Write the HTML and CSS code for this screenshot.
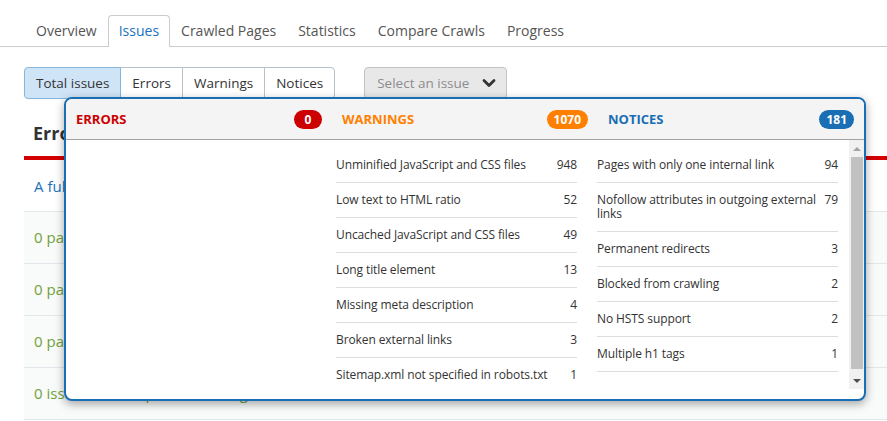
FILE: index.html
```html
<!DOCTYPE html>
<html lang="en">
<head>
<meta charset="utf-8">
<title>Site Audit - Issues</title>
<link rel="stylesheet" href="styles.css">
</head>
<body>
<nav class="tabs">
  <span class="tab">Overview</span>
  <span class="tab active">Issues</span>
  <span class="tab">Crawled Pages</span>
  <span class="tab">Statistics</span>
  <span class="tab">Compare Crawls</span>
  <span class="tab">Progress</span>
</nav>

<div class="toolbar">
  <div class="btn-group">
    <span class="btn active">Total issues</span>
    <span class="btn">Errors</span>
    <span class="btn">Warnings</span>
    <span class="btn">Notices</span>
  </div>
  <div class="select">
    <span>Select an issue</span>
    <svg class="chev" width="14" height="10" viewBox="0 0 14 10"><path d="M2 2.5 L7 7.5 L12 2.5" fill="none" stroke="#333" stroke-width="2.8" stroke-linecap="round" stroke-linejoin="round"/></svg>
  </div>
</div>

<section class="errors">
  <h2 class="errors-title">Errors</h2>
  <div class="redbar"></div>
  <div class="intro">A full list of errors found on your website</div>
  <div class="err-row">0 pages returned 5XX status code</div>
  <div class="err-row">0 pages returned 4XX status code</div>
  <div class="err-row">0 pages don't have title tags</div>
  <div class="err-row">0 issues with duplicate title tags</div>
</section>

<div class="popup">
  <div class="popup-head">
    <div class="head-cell"><span class="label red">ERRORS</span><span class="badge bg-red">0</span></div>
    <div class="head-cell"><span class="label orange">WARNINGS</span><span class="badge bg-orange">1070</span></div>
    <div class="head-cell"><span class="label blue">NOTICES</span><span class="badge bg-blue">181</span></div>
  </div>
  <div class="popup-body">
    <div class="col"></div>
    <div class="col">
      <div class="item"><span class="name">Unminified JavaScript and CSS files</span><span class="num">948</span></div>
      <div class="item"><span class="name">Low text to HTML ratio</span><span class="num">52</span></div>
      <div class="item"><span class="name">Uncached JavaScript and CSS files</span><span class="num">49</span></div>
      <div class="item"><span class="name">Long title element</span><span class="num">13</span></div>
      <div class="item"><span class="name">Missing meta description</span><span class="num">4</span></div>
      <div class="item"><span class="name">Broken external links</span><span class="num">3</span></div>
      <div class="item last"><span class="name">Sitemap.xml not specified in robots.txt</span><span class="num">1</span></div>
    </div>
    <div class="col">
      <div class="item"><span class="name">Pages with only one internal link</span><span class="num">94</span></div>
      <div class="item"><span class="name">Nofollow attributes in outgoing external<br>links</span><span class="num">79</span></div>
      <div class="item"><span class="name">Permanent redirects</span><span class="num">3</span></div>
      <div class="item"><span class="name">Blocked from crawling</span><span class="num">2</span></div>
      <div class="item"><span class="name">No HSTS support</span><span class="num">2</span></div>
      <div class="item"><span class="name">Multiple h1 tags</span><span class="num">1</span></div>
    </div>
    <div class="scrollbar">
      <div class="sb-arrow"><span class="tri-up"></span></div>
      <div class="sb-thumb"></div>
      <div class="sb-arrow"><span class="tri-down"></span></div>
    </div>
  </div>
</div>
</body>
</html>
```

FILE: styles.css
```css
* { box-sizing: border-box; }

body {
  margin: 0;
  width: 887px;
  height: 421px;
  overflow: hidden;
  position: relative;
  font-family: "Open Sans", "Liberation Sans", sans-serif;
  color: #333;
  background: #fff;
}

/* Tabs */
.tabs {
  display: flex;
  height: 47px;
  padding: 15px 0 0 25px;
  border-bottom: 1px solid #ccc;
}
.tab {
  height: 31px;
  padding: 0 10px;
  font-size: 14px;
  line-height: 30px;
  color: #555;
  border: 1px solid transparent;
  border-bottom: none;
  border-radius: 4px 4px 0 0;
}
.tab.active {
  height: 32px;
  color: #1a73ba;
  background: #fff;
  border-color: #ccc;
}

/* Toolbar */
.toolbar {
  display: flex;
  gap: 29px;
  padding: 20px 0 0 24px;
}
.btn-group { display: flex; }
.btn {
  height: 32px;
  padding: 0 11px;
  font-size: 13.5px;
  line-height: 30px;
  color: #333;
  background: #fff;
  border: 1px solid #b7c2c9;
  margin-left: -1px;
}
.btn:first-child { margin-left: 0; border-radius: 4px 0 0 4px; }
.btn:last-child { border-radius: 0 4px 4px 0; }
.btn.active {
  background: #cfe4f6;
  border-color: #86b6de;
  position: relative;
}
.select {
  display: flex;
  align-items: center;
  justify-content: space-between;
  width: 143px;
  height: 32px;
  padding: 0 10px 0 12px;
  font-size: 13.5px;
  color: #8c8c8c;
  background: #e8e8e8;
  border: 1px solid #c3c3c3;
  border-radius: 4px;
}

/* Background errors section */
.errors { padding-left: 24px; }
.errors-title {
  margin: 0;
  padding: 22px 0 0 9px;
  font-size: 18px;
  line-height: 24px;
  font-weight: 700;
  color: #333;
}
.redbar {
  margin-top: 11px;
  height: 4px;
  background: #d40000;
}
.intro {
  padding: 16px 0 15px 10px;
  font-size: 15px;
  line-height: 20px;
  color: #1a73ba;
  border-bottom: 1px solid #e1e7eb;
}
.err-row {
  height: 52px;
  padding-left: 10px;
  font-size: 15px;
  line-height: 51px;
  color: #72a23c;
  background: #f9fafa;
  border-bottom: 1px solid #e1e7eb;
}

/* Popup */
.popup {
  position: absolute;
  left: 64px;
  top: 97px;
  width: 802px;
  height: 304px;
  display: flex;
  flex-direction: column;
  background: #fff;
  border: 2px solid #1a6eb4;
  border-radius: 8px;
  box-shadow: 0 3px 10px rgba(0, 0, 0, 0.35);
  overflow: hidden;
}
.popup-head {
  display: grid;
  grid-template-columns: repeat(3, 266px);
  height: 41px;
  background: #f4f4f4;
  border-bottom: 1px solid #a3a3a3;
}
.head-cell {
  display: flex;
  align-items: center;
  justify-content: space-between;
  padding: 0 10px;
}
.label {
  font-size: 13px;
  font-weight: 700;
}
.red { color: #cc0000; }
.orange { color: #ff8000; }
.blue { color: #1a6eb4; }
.badge {
  min-width: 28px;
  height: 19px;
  padding: 0 7px;
  border-radius: 10px;
  font-size: 12px;
  font-weight: 700;
  line-height: 19px;
  text-align: center;
  color: #fff;
}
.bg-red { background: #cc0000; }
.bg-orange { background: #ff8000; }
.bg-blue { background: #1a6eb4; }

.popup-body {
  flex: 1;
  display: flex;
  padding-left: 9px;
  overflow: hidden;
}
.col {
  width: 241px;
  flex: none;
  margin-right: 20px;
  padding-top: 8px;
}
.col:nth-child(3) { margin-right: 11px; }
.item {
  display: flex;
  justify-content: space-between;
  padding: 10px 0;
  font-size: 12px;
  line-height: 14px;
  letter-spacing: -0.1px;
  color: #333;
  border-bottom: 1px solid #ddd;
}
.item.last { border-bottom: none; }
.name { white-space: nowrap; }
.num { padding-left: 6px; flex: none; }

.scrollbar {
  width: 15px;
  height: 249px;
  flex: none;
  display: flex;
  flex-direction: column;
  align-items: center;
  background: #f1f1f1;
}
.sb-arrow {
  height: 17px;
  width: 15px;
  display: flex;
  align-items: center;
  justify-content: center;
}
.sb-thumb {
  width: 12px;
  height: 212px;
  margin-bottom: 3px;
  background: #c1c1c1;
}
.tri-up {
  width: 0; height: 0;
  border-left: 4px solid transparent;
  border-right: 4px solid transparent;
  border-bottom: 4px solid #a3a3a3;
}
.tri-down {
  width: 0; height: 0;
  border-left: 4px solid transparent;
  border-right: 4px solid transparent;
  border-top: 4px solid #505050;
}
```
